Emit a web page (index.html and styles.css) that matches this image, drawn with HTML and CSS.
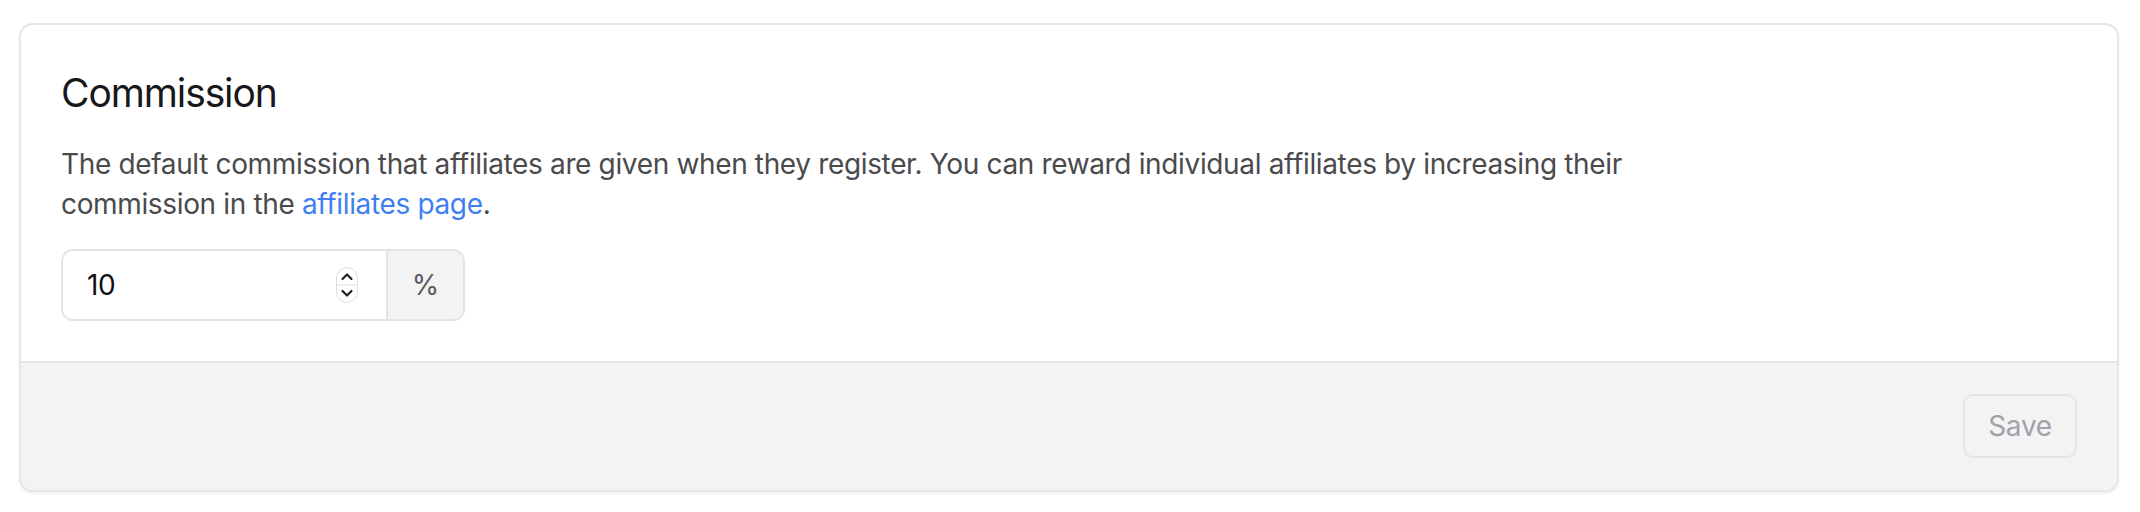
FILE: index.html
```html
<!DOCTYPE html>
<html lang="en">
<head>
<meta charset="utf-8">
<title>Commission</title>
<link rel="stylesheet" href="styles.css">
</head>
<body>
<div class="page">
  <section class="card">
    <div class="card-body">
      <h2 class="title">Commission</h2>
      <p class="desc">The default commission that affiliates are given when they register. You can reward individual affiliates by increasing their commission in the <a class="link" href="#">affiliates page</a>.</p>
      <div class="input-group">
        <div class="input">
          <span class="value">10</span>
          <svg class="spinner" width="24" height="38" viewBox="0 0 24 38">
            <rect x="1.5" y="1.5" width="21" height="35" rx="10.5" fill="#fff" stroke="#dedede" stroke-width="1"/>
            <line x1="1.5" y1="19" x2="22.5" y2="19" stroke="#dedede" stroke-width="1"/>
            <path d="M7.5 13 L12 8.5 L16.5 13" fill="none" stroke="#222" stroke-width="2.2" stroke-linecap="round" stroke-linejoin="round"/>
            <path d="M7.5 25 L12 29.5 L16.5 25" fill="none" stroke="#222" stroke-width="2.2" stroke-linecap="round" stroke-linejoin="round"/>
          </svg>
        </div>
        <div class="addon">%</div>
      </div>
    </div>
    <div class="card-footer">
      <button class="btn" type="button" disabled>Save</button>
    </div>
  </section>
</div>
</body>
</html>
```

FILE: styles.css
```css
* { box-sizing: border-box; }
html, body { margin: 0; padding: 0; background: #fff; }
body {
  font-family: Inter, "Noto Sans", "Liberation Sans", sans-serif;
  width: 2140px;
  height: 512px;
  overflow: hidden;
}
.page {
  padding: 23px 21px 0 19px;
}
.card {
  border: 2px solid #e6e6e8;
  border-radius: 14px;
  background: #fff;
  box-shadow: 0 2px 3px rgba(0, 0, 0, 0.06);
  overflow: hidden;
}
.card-body {
  padding: 40px 40px 40px 40px;
}
.title {
  margin: 0;
  font-size: 39px;
  line-height: 56px;
  font-weight: 400;
  color: #18181b;
  letter-spacing: -1.1px;
}
.desc {
  margin: 23px 0 0 0;
  max-width: 1600px;
  font-size: 28px;
  line-height: 40px;
  color: #4a4a4d;
  letter-spacing: -0.35px;
}
.link {
  color: #3f7ff0;
  text-decoration: none;
}
.input-group {
  margin-top: 25px;
  display: flex;
  width: 404px;
  height: 72px;
  border: 2px solid #e4e4e7;
  border-radius: 12px;
  overflow: hidden;
}
.input {
  flex: 1;
  display: flex;
  align-items: center;
  justify-content: space-between;
  padding: 0 27px 0 24px;
  background: #fff;
}
.value {
  font-size: 28px;
  color: #111;
  letter-spacing: -0.3px;
}
.spinner {
  display: block;
}
.addon {
  width: 77px;
  display: flex;
  align-items: center;
  justify-content: center;
  border-left: 2px solid #e4e4e7;
  background: #f3f3f4;
  color: #5a5a5e;
  font-size: 28px;
}
.card-footer {
  border-top: 2px solid #e4e4e7;
  background: #f3f3f4;
  padding: 31px 40px 32px 40px;
  display: flex;
  justify-content: flex-end;
}
.btn {
  font-family: inherit;
  font-size: 28px;
  line-height: 40px;
  height: 64px;
  width: 114px;
  padding: 0;
  border: 2px solid #e4e4e7;
  border-radius: 10px;
  background: #f3f3f4;
  color: #a1a1aa;
  letter-spacing: -0.3px;
}
```
